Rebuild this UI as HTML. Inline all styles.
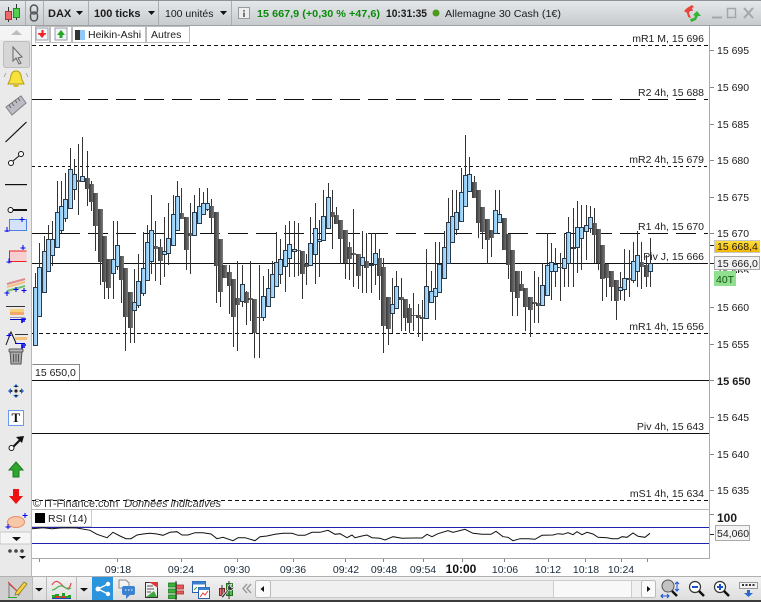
<!DOCTYPE html>
<html><head><meta charset="utf-8"><title>DAX</title>
<style>
html,body{margin:0;padding:0;width:761px;height:602px;overflow:hidden;background:#fff}
svg{display:block}
text{font-family:"Liberation Sans",sans-serif;font-size:10.5px;fill:#1c1c1c}
.r{font-size:10.5px;text-anchor:end;fill:#222}
.p{fill:#222}
.t{text-anchor:middle;fill:#1a2a3a}
.b{font-weight:bold;font-size:11px}
</style></head><body>
<svg id="s" width="761" height="602" viewBox="0 0 761 602" xmlns="http://www.w3.org/2000/svg">
<defs>
<linearGradient id="top" x1="0" y1="0" x2="0" y2="1"><stop offset="0" stop-color="#e6e9ec"/><stop offset="1" stop-color="#c6cacd"/></linearGradient>
<linearGradient id="up" x1="0" y1="0" x2="1" y2="0"><stop offset="0" stop-color="#7cc2f3"/><stop offset="1" stop-color="#c2e4fb"/></linearGradient>
<linearGradient id="dn" x1="0" y1="0" x2="1" y2="0"><stop offset="0" stop-color="#383838"/><stop offset="1" stop-color="#7a7a7a"/></linearGradient>
<linearGradient id="yl" x1="0" y1="0" x2="0" y2="1"><stop offset="0" stop-color="#ffe040"/><stop offset="1" stop-color="#f2b400"/></linearGradient>
<linearGradient id="bar" x1="0" y1="0" x2="0" y2="1"><stop offset="0" stop-color="#f2f2f2"/><stop offset="1" stop-color="#dedede"/></linearGradient>
</defs>
<rect width="761" height="602" fill="#fff"/>

<!-- top bar -->
<rect width="761" height="26" fill="url(#top)"/>
<rect y="0" width="761" height="1" fill="#8f9397"/>
<rect y="25" width="761" height="1" fill="#9da1a4"/>
<g fill="#a9adb0"><rect x="25" y="1" width="1" height="24"/><rect x="43" y="1" width="1" height="24"/><rect x="88" y="1" width="1" height="24"/><rect x="158" y="1" width="1" height="24"/><rect x="231" y="1" width="1" height="24"/></g>
<path d="M8.500 7V22M16.500 4V20" stroke="#333" fill="none"/>
<rect x="5.500" y="11.500" width="6" height="8" fill="#ee6a6a" stroke="#a33"/>
<rect x="13.500" y="8.500" width="6" height="9" fill="#4fd14f" stroke="#2a8a2a"/>
<g fill="none" stroke="#555" stroke-width="1.500"><rect x="30.500" y="5" width="7" height="9" rx="3.500"/><rect x="30.500" y="12" width="7" height="9" rx="3.500"/></g>
<text x="48" y="17" class="b">DAX</text><path d="M76 11h7l-3.500 4z" fill="#111"/>
<text x="94" y="17" class="b">100 ticks</text><path d="M148 11h7l-3.500 4z" fill="#111"/>
<text x="165" y="17">100 unités</text><path d="M220 11h7l-3.500 4z" fill="#111"/>
<rect x="238.500" y="7.500" width="11" height="11" fill="#eee" stroke="#999"/><path d="M243 10h2v1.500h-2zM243 12.500h2V17h-2z" fill="#777"/>
<text x="257" y="17" style="fill:#0a8a0a;font-weight:bold" textLength="123" lengthAdjust="spacingAndGlyphs">15 667,9 (+0,30 % +47,6)</text>
<text x="386" y="17" class="b" textLength="41" lengthAdjust="spacingAndGlyphs">10:31:35</text>
<circle cx="436" cy="13" r="3.500" fill="#4c9a1c"/>
<text x="445" y="17" textLength="116" lengthAdjust="spacingAndGlyphs">Allemagne 30 Cash (1€)</text>
<path d="M692 5l-5 3-3 3 3 2 1 4 3 1-2-5 1-2h3l-1-3 2-1z" fill="#e8453c"/>
<path d="M691 22l5-2 2-4 3 0-4-5-4 4 2 1-1 2-4 1z" fill="#35b335"/>
<g fill="none" stroke="#a3a7aa" stroke-width="2"><path d="M712 17.500h10"/><rect x="727.500" y="8.500" width="8" height="9" stroke-width="1.500"/><path d="M744 8l9 10M753 8l-9 10"/></g>

<!-- left toolbar -->
<rect y="26" width="31" height="551" fill="#eaeaea"/>
<rect x="31" y="26" width="1" height="551" fill="#b8b8b8"/>
<rect x="0" y="26" width="31" height="14" fill="#f4f4f4"/>
<path d="M11 35h11l-5.500-5z" fill="#bdbdbd"/>
<rect x="3.500" y="41.500" width="26" height="26" rx="2" fill="#d6d6d6" stroke="#bdbdbd"/>
<path d="M13 47v14l3-3 3 6 2-1-3-5 4-1z" fill="#ddd" stroke="#666"/>
<path d="M16 71c-5 0-5 5-6 9-1 2-2 3-2 4h16c0-1-1-2-2-4-1-4-1-9-6-9z" fill="#f6e23a" stroke="#b09a10"/>
<path d="M13 85h6a3 2 0 0 1-6 0z" fill="#d8b800"/>
<path d="M6 73l-2 4M26 73l2 4" stroke="#aaa" fill="none"/>
<path d="M6 107L21 96l5 7-14 12z" fill="#bcbcc4" stroke="#808088"/>
<path d="M9 105l2 3M12 103l2 3M15 100l2 3M18 98l2 3" stroke="#666" fill="none"/>
<path d="M5.500 142L26.500 122" stroke="#111" stroke-width="1.200" fill="none"/>
<path d="M13 161L20 155" stroke="#111" fill="none"/><g fill="#fff" stroke="#111"><circle cx="11" cy="163" r="2.500"/><circle cx="21" cy="154" r="2.500"/></g>
<rect x="5" y="184" width="22" height="1.200" fill="#111"/>
<rect x="12" y="209" width="15" height="2" fill="#111"/><circle cx="10.500" cy="210" r="2.500" fill="#fff" stroke="#111"/>
<rect x="9.500" y="219.500" width="17" height="11" fill="#d4e2fa" stroke="#4d7fdc"/>
<path d="M7 232v-5M4.500 231h5M22 222v-5M19.500 219.500h5" stroke="#00e" fill="none"/>
<rect x="9.500" y="251.500" width="17" height="10" fill="#f6cfd0"/><path d="M9.500 262v-11h17M9.500 261.500h17" stroke="#e22" fill="none"/>
<path d="M9 263.500v-5M6.500 262h5M23 250v-5M20.500 248h5" stroke="#00e" fill="none"/>
<path d="M7 284l18-5" stroke="#e08a8a" stroke-width="2" fill="none"/><path d="M7 287l18-5" stroke="#f0c080" stroke-width="2" fill="none"/><path d="M7 291l18-5" stroke="#70c070" stroke-width="2" fill="none"/>
<path d="M7 296v-5M4.500 293h5M16 292v-5M13.500 289.500h5M24 293v-5M21.500 290.500h5" stroke="#00e" fill="none"/>
<rect x="6" y="306" width="19" height="1" fill="#333" /><rect x="10" y="309" width="14" height="3" fill="#f6d27a"/><rect x="10" y="312" width="14" height="3" fill="#f4a86a"/><rect x="10" y="317" width="15" height="1" fill="#99a"/><rect x="10" y="319" width="15" height="1" fill="#00c"/>
<path d="M22 323v-4h4M22 321h3" stroke="#00e" stroke-width="1.600" fill="none"/>
<path d="M6 345l5-13 5 11" stroke="#111" fill="none"/><rect x="15" y="334" width="13" height="1" fill="#333"/><rect x="15" y="337" width="12" height="3" fill="#f6c27a"/><rect x="15" y="343" width="10" height="1" fill="#00c"/>
<path d="M9 338v-5M6.500 335.500h5" stroke="#00e" fill="none"/><path d="M22 349v-4h4M22 347h3" stroke="#00e" stroke-width="1.600" fill="none"/>
<path d="M10 351h12l-1 13h-10z" fill="#aaa" stroke="#555"/><rect x="9" y="349" width="14" height="3" rx="1" fill="#bbb" stroke="#555"/>
<path d="M13.500 354v8M16 354v8M18.500 354v8" stroke="#555" fill="none"/>
<g fill="#2a6ad0"><path d="M16 384l3 3h-6zM16 398l3-3h-6zM8 391l3-3v6zM24 391l-3-3v6z"/></g><circle cx="16" cy="391" r="1.600" fill="#222"/><circle cx="11.500" cy="391" r="1" fill="#222"/><circle cx="20.500" cy="391" r="1" fill="#222"/><circle cx="16" cy="386.500" r="1" fill="#222"/><circle cx="16" cy="395.500" r="1" fill="#222"/>
<rect x="8.500" y="410.500" width="15" height="15" fill="#fff" stroke="#6a9af0"/>
<text x="11.500" y="422" style="font-family:'Liberation Serif',serif;font-size:13px;font-weight:bold;fill:#111">T</text>
<path d="M13 447L21 439" stroke="#111" stroke-width="2" fill="none"/><path d="M24 436l-8 1 6 6z" fill="#111"/><circle cx="11.500" cy="448" r="2.500" fill="#fff" stroke="#111"/>
<path d="M16 462l7 8h-4v7h-6v-7h-4z" fill="#2ea62e" stroke="#1c7a1c"/>
<path d="M13 489h6v7h4l-7 8-7-8h4z" fill="#ee1111"/>
<ellipse cx="16" cy="522" rx="8.500" ry="5.500" fill="#f6c8a8" stroke="#e88a60"/>
<path d="M25 518v-5M22.500 515.500h5M8 529v-5M5.500 527h5" stroke="#00e" fill="none"/>
<rect x="0" y="532" width="31" height="12" fill="#f6f6f6" stroke="#c8c8c8"/>
<path d="M12 537h9l-4.500 4z" fill="#111"/>
<circle cx="10" cy="551" r="1.800" fill="#444"/><circle cx="16" cy="551" r="1.800" fill="#444"/><circle cx="22" cy="551" r="1.800" fill="#444"/>
<path d="M19 556h7l-3.500 3z" fill="#111"/>

<!-- tabs row -->
<g fill="#fff" stroke="#bdbdbd"><rect x="35.500" y="26.500" width="14" height="16"/><rect x="50.500" y="26.500" width="21" height="16"/><rect x="72.500" y="26.500" width="73" height="16"/><rect x="146.500" y="26.500" width="43" height="16"/></g>
<rect x="36" y="28" width="12" height="12" fill="#f2f4f8" stroke="#99a"/><path d="M41.500 30v3H38l4 5 4-5h-2.500v-3z" fill="#e22"/><path d="M38 34h8" stroke="#e22"/>
<rect x="55" y="28" width="12" height="12" fill="#f2f4f8" stroke="#99a"/><path d="M61 30l-4 5h2.500v3h3v-3H65z" fill="#2a2"/>
<rect x="75" y="30" width="5" height="10" fill="#333"/><rect x="80" y="30" width="5" height="10" fill="#90c8f8"/>
<text x="88" y="38">Heikin-Ashi</text><text x="151" y="38">Autres</text>

<!-- chart lines -->
<g fill="none" stroke="#111">
<path d="M32 45.500H708" stroke-dasharray="4 3"/>
<path d="M32 99.500H708" stroke-dasharray="20 8"/>
<path d="M32 166.500H708" stroke-dasharray="3 3"/>
<path d="M32 233.500H708" stroke-dasharray="20 8"/>
<path d="M32 263.500H708"/>
<path d="M32 333.500H708" stroke-dasharray="4 3"/>
<path d="M32 380.500H709"/>
<path d="M32 433.500H709"/>
<path d="M32 500.500H708" stroke-dasharray="4 3"/>
</g>
<g id="c"></g>

<!-- static labels -->
<text class="r" x="704" y="42">mR1 M, 15 696</text>
<text class="r" x="704" y="96">R2 4h, 15 688</text>
<text class="r" x="704" y="163">mR2 4h, 15 679</text>
<text class="r" x="704" y="230">R1 4h, 15 670</text>
<text class="r" x="704" y="260">Piv J, 15 666</text>
<text class="r" x="704" y="330">mR1 4h, 15 656</text>
<text class="r" x="704" y="430">Piv 4h, 15 643</text>
<text class="r" x="704" y="497">mS1 4h, 15 634</text>
<rect x="32" y="364" width="47" height="16" fill="#fff"/><path d="M32.500 364.500H79.500V380" fill="none" stroke="#888"/>
<text x="35" y="376">15 650,0</text>
<text x="33" y="507" style="fill:#333;font-size:10.800px">© IT-Finance.com<tspan dx="6" font-style="italic">Données indicatives</tspan></text>

<!-- axis -->
<rect x="709" y="26" width="1" height="533" fill="#aaa"/>
<g fill="#888"><rect x="710" y="50" width="4" height="1"/><rect x="710" y="87" width="4" height="1"/><rect x="710" y="124" width="4" height="1"/><rect x="710" y="160" width="4" height="1"/><rect x="710" y="197" width="4" height="1"/><rect x="710" y="233" width="4" height="1"/><rect x="710" y="307" width="4" height="1"/><rect x="710" y="344" width="4" height="1"/><rect x="710" y="380" width="4" height="1"/><rect x="710" y="417" width="4" height="1"/><rect x="710" y="454" width="4" height="1"/><rect x="710" y="490" width="4" height="1"/><rect x="710" y="514" width="4" height="1"/></g>
<g class="p">
<text x="717" y="54">15 695</text><text x="717" y="91">15 690</text><text x="717" y="128">15 685</text><text x="717" y="164">15 680</text><text x="717" y="201">15 675</text><text x="717" y="237">15 670</text><text x="717" y="275">15 665</text><text x="717" y="311">15 660</text><text x="717" y="348">15 655</text><text x="717" y="385" class="b">15 650</text><text x="717" y="421">15 645</text><text x="717" y="458">15 640</text><text x="717" y="494">15 635</text>
</g>
<rect x="714" y="273" width="47" height="14" fill="#fff"/>
<rect x="710" y="245" width="4" height="1" fill="#222"/><rect x="710" y="263" width="4" height="1" fill="#222"/>
<rect x="714.500" y="240.500" width="45" height="12" fill="url(#yl)" stroke="#c8c8c8"/><text x="717" y="250">15 668,4</text>
<rect x="714.500" y="256.500" width="45" height="13" fill="#f2f2f2" stroke="#aaa"/><text x="717" y="267">15 666,0</text>
<rect x="714" y="271" width="22" height="15" fill="#90e090"/><text x="716" y="283" style="fill:#165016">40T</text>

<!-- RSI -->
<rect x="32" y="509" width="678" height="1" fill="#b8b8b8"/>
<rect x="32" y="558" width="678" height="1" fill="#aaa"/>
<rect x="32" y="527" width="677" height="1" fill="#2222b0"/>
<rect x="32" y="543" width="677" height="1" fill="#2222b0"/>
<path fill="none" stroke="#111" d="M32 528.700L43 527.700L52 528.700L60 528L68 527.700L77 528L90 530.300L97 534.300L107 537.700L113 532.300L120 536L126 538.700L131 538.700L137 535L143 534L150 533.300L157 534L163 535.300L170 532.300L177 531.700L182 535L188 535L195 532.700L203 532.700L211 534L217 538.700L223 537.300L233 540.700L238 537.700L245 537.700L255 540.700L260 536.700L267 536L275 534.300L283 533.300L292 533.300L298 535.300L305 535.300L312 532.300L320 532.300L328 530.300L335 534.300L340 533.700L347 537.700L352 535L355 537.700L362 536L367 535L372 537.700L380 538.300L385 540L393 536.700L402 538.300L413 538L422 538L427 534.300L432 536.700L438 533.700L448 530.700L453 532.300L465 529.300L473 533.300L482 534.300L491 534.300L496 531.300L503 536.700L508 537.300L513 540.700L520 538.700L528 538.700L535 539.300L542 535.300L553 535L558 533.700L563 534.300L568 532.700L573 534.700L577 531.700L582 534.700L587 532.300L593 534L598 537.300L607 537.700L612 538.700L618 538.700L622 536.700L627 537.300L633 533L638 536.300L645 537.300L650 533.300"/>
<rect x="32" y="510" width="59" height="16" fill="#fff"/><path d="M91.500 510V526.500H32" fill="none" stroke="#ccc"/>
<rect x="35" y="513" width="10" height="10" fill="#000"/><text x="48" y="522">RSI (14)</text>
<text x="717" y="522" style="font-size:12px;font-weight:bold">100</text>
<rect x="710" y="534" width="4" height="1" fill="#222"/>
<rect x="715.500" y="525.500" width="34" height="15" fill="#f4f4f4" stroke="#aaa"/><text x="717" y="537">54,060</text>

<!-- time axis -->
<g fill="#888"><rect x="39" y="559" width="1" height="3"/><rect x="117" y="559" width="1" height="3"/><rect x="181" y="559" width="1" height="3"/><rect x="237" y="559" width="1" height="3"/><rect x="293" y="559" width="1" height="3"/><rect x="345" y="559" width="1" height="3"/><rect x="383" y="559" width="1" height="3"/><rect x="423" y="559" width="1" height="3"/><rect x="462" y="559" width="1" height="3"/><rect x="504" y="559" width="1" height="3"/><rect x="548" y="559" width="1" height="3"/><rect x="585" y="559" width="1" height="3"/><rect x="621" y="559" width="1" height="3"/><rect x="647" y="559" width="1" height="3"/></g>
<g><text class="t" x="118" y="573">09:18</text><text class="t" x="181" y="573">09:24</text><text class="t" x="237" y="573">09:30</text><text class="t" x="293" y="573">09:36</text><text class="t" x="346" y="573">09:42</text><text class="t" x="384" y="573">09:48</text><text class="t" x="423" y="573">09:54</text><text class="t" x="461" y="573" style="font-size:12px;font-weight:bold;fill:#111">10:00</text><text class="t" x="505" y="573">10:06</text><text class="t" x="548" y="573">10:12</text><text class="t" x="586" y="573">10:18</text><text class="t" x="621" y="573">10:24</text></g>

<!-- bottom bar -->
<rect y="577" width="761" height="23" fill="url(#bar)"/>
<rect y="576" width="761" height="1" fill="#b0b0b0"/>
<rect y="600" width="761" height="2" fill="#3c3c3c"/>
<rect x="0" y="577" width="32" height="23" fill="#d0d0d0"/>
<path d="M9 597V584l8 7 2 5" fill="none" stroke="#777"/><path d="M8 582l12 12" stroke="#e03030" fill="none"/><path d="M8 597.500h9" stroke="#2a2"/>
<path d="M16 592l8-10 3 2-8 10-4 1z" fill="#f2d040" stroke="#8a7a20" stroke-width=".8"/>
<rect x="32" y="577" width="1" height="23" fill="#bbb"/>
<path d="M35 588h8l-4 3.500z" fill="#111"/>
<rect x="46" y="577" width="1" height="23" fill="#bbb"/><rect x="76" y="577" width="1" height="23" fill="#bbb"/>
<path d="M52 585c4-7 8-2 11 1s7 4 8-3" fill="none" stroke="#e04848" stroke-width="1.200"/>
<path d="M52 590c4 0 6-5 10-4s5 5 9 2" fill="none" stroke="#50b050" stroke-width="1.200"/>
<path d="M52 598v-3h3v-1h4v2h3v-3h3v3h3v-1h3v3z" fill="#22a022"/><path d="M55 598v-2h4v2zM62 598v-2h3v2z" fill="#e03030"/><rect x="52" y="598" width="19" height="1" fill="#2040c0"/>
<path d="M80 588h8l-4 3.500z" fill="#111"/>
<rect x="92" y="577" width="21" height="23" fill="#2a94dc"/>
<path d="M98 589l10-5M98 589l10 5" stroke="#fff" fill="none" stroke-width="1.300"/><circle cx="98" cy="589" r="2.500" fill="#fff"/><circle cx="108" cy="584" r="2.200" fill="#fff"/><circle cx="108" cy="594" r="2.200" fill="#fff"/>
<path d="M119 580h7l3 3v5h-10z" fill="#f4f4f4" stroke="#8a8a8a"/>
<rect x="122" y="586" width="13" height="9" rx="2" fill="#3b82d0"/><path d="M126 595v4l4-4z" fill="#3b82d0"/><path d="M125 590h1.500M128 590h1.500M131 590h1.500" stroke="#fff"/>
<rect x="145.500" y="582.500" width="12" height="15" fill="#f0f0f0" stroke="#333"/><path d="M149 582h9v6z" fill="#d83a3a"/><path d="M146 597l8-6 3 6z" fill="#3da83d"/><path d="M147 586h6M147 589h7M147 592h4" stroke="#555" fill="none"/>
<g fill="#3cb03c" stroke="#1c7a1c" stroke-width=".8"><rect x="168.500" y="583" width="8" height="4"/><rect x="168.500" y="589" width="8" height="4"/><rect x="168.500" y="595" width="8" height="3.500"/></g><g fill="#e85a5a" stroke="#a83030" stroke-width=".8"><rect x="176.500" y="585" width="7" height="4"/><rect x="176.500" y="591" width="7" height="3"/></g><path d="M176 581v19" stroke="#333"/>
<rect x="192.500" y="581.500" width="13" height="11" fill="#fff" stroke="#2a5fb0"/><rect x="192.500" y="581.500" width="13" height="3" fill="#3a80d0"/>
<rect x="198.500" y="587.500" width="11" height="11" fill="#fff" stroke="#2a5fb0"/><rect x="198.500" y="587.500" width="11" height="2.500" fill="#3a80d0"/><path d="M200 597l3-4 2 2 3-4" stroke="#e04040" fill="none"/><path d="M194 590l3-3" stroke="#40a040" fill="none"/>
<rect x="219.500" y="588.500" width="5" height="7" fill="#e87070" stroke="#802020"/><rect x="226.500" y="583.500" width="6" height="12" fill="#50c050" stroke="#207020"/><path d="M229 581v18M222 585v13" stroke="#333"/>
<path d="M221 597l7-8c-1-3 1-5 4-5l-2 2 2 2 2-2c0 3-2 5-5 4l-6 8z" fill="#333" stroke="#fff" stroke-width=".6"/>
<path d="M247 584l-4 4.500 4 4.500M251 584l-4 4.500 4 4.500" stroke="#999" stroke-width="1.400" fill="none"/>
<rect x="255.500" y="580.500" width="400" height="17" rx="2" fill="#f0f0f0" stroke="#ccc"/>
<rect x="255.500" y="580.500" width="15" height="17" rx="2" fill="#fafafa" stroke="#bbb"/><path d="M264 586v6l-3.500-3z" fill="#111"/>
<path d="M553.500 581v16M631.500 581v16" stroke="#ccc" fill="none"/><rect x="554" y="581" width="77" height="16" fill="#f8f8f8"/>
<rect x="641.500" y="580.500" width="14" height="17" rx="2" fill="#fafafa" stroke="#bbb"/><path d="M647 586v6l3.500-3z" fill="#111"/>
<circle cx="668" cy="586" r="6" fill="#c2c2c2" stroke="#555"/><path d="M672 591l5 5" stroke="#111" stroke-width="2.500" fill="none"/>
<path d="M677 582v9M675 584l2-2 2 2M675 589l2 2 2-2M661 596h8M663 594l-2 2 2 2M667 594l2 2-2 2" stroke="#1a50d0" fill="none"/>
<circle cx="695" cy="587" r="5.500" fill="#fff" stroke="#333" stroke-width="1.200"/><path d="M692 587h6" stroke="#1a50d0" stroke-width="2" fill="none"/><path d="M699 591l5 5" stroke="#111" stroke-width="2.500" fill="none"/>
<circle cx="720" cy="587" r="5.500" fill="#fff" stroke="#333" stroke-width="1.200"/><path d="M717 587h6M720 584v6" stroke="#1a50d0" stroke-width="2" fill="none"/><path d="M724 591l5 5" stroke="#111" stroke-width="2.500" fill="none"/>
<rect x="739.500" y="582.500" width="18" height="6" fill="#f2f2f2" stroke="#999"/><path d="M742 584h2v2h-2zM745.500 584h2v2h-2zM749 584h2v2h-2zM752.500 584h2v2h-2z" fill="#333"/><path d="M747 590h3v3h3l-4.500 4-4.500-4h3z" fill="#2a6ad0"/>
</svg>
<script>
var D=[
[30,130,[[16,472,646,430,646,1],[28,412,559,340,559,1],[43,364,487,318,487,1],[55,328,424,285,424,1],[67,328,376,274,408,1],[82,247,352,153,352,1],[94,229,301,153,310,1],[106,208,265,130,275,1],[121,118,235,55,235,1],[133,133,178,87,210,1],[145,151,155,42,254,0],[157,139,154,22,154,1],[171,144,176,63,228,0],[183,163,216,153,243,0],[195,190,287,190,362,0],[210,238,395,238,465,0],[222,319,455,319,507,0],[234,388,473,388,507,0],[250,388,430,274,507,1],[262,346,409,274,420,1],[273,379,449,379,519,0],[285,415,560,415,662,0],[300,487,593,487,638,0],[313,515,541,418,638,1],[325,454,526,373,535,1],[340,415,490,307,497,1],[352,337,451,286,451,1],[364,301,394,196,432,1],[376,349,356,274,452,0],[390,352,392,326,465,0],[403,364,373,262,440,1],[415,325,370,220,406,1],[429,253,346,196,346,1],[442,199,301,154,301,1],[454,250,268,175,268,0],[468,262,359,262,420,0],[480,310,319,220,432,0],[493,247,316,196,316,1],[506,229,280,175,280,1]]],
[200,170,[[10,100,133,67,133,1],[22,100,118,55,122,1],[34,109,143,87,190,0],[48,127,287,127,398,0],[60,208,365,208,410,0],[72,286,323,286,323,0],[87,306,347,286,432,0],[99,328,440,328,530,0],[111,385,404,274,542,0],[127,343,394,286,410,1],[139,367,398,364,464,0],[150,385,391,274,452,0],[162,388,490,388,563,0],[178,441,443,286,563,0],[190,379,442,319,452,1],[203,355,409,298,409,1],[217,313,382,274,382,1],[229,277,349,187,349,1],[241,268,313,208,343,1],[256,241,289,166,365,1],[268,223,265,154,320,1],[281,238,244,154,320,1],[293,240,243,160,319,0],[306,244,311,244,386,0],[318,281,290,252,345,0],[331,220,286,142,286,1],[346,175,253,100,343,1],[358,208,214,150,320,1],[370,139,211,61,211,1],[385,82,175,40,175,1],[397,127,142,61,238,0],[408,136,163,112,163,0],[420,151,208,151,283,0],[435,181,280,181,326,0],[447,232,268,217,331,0],[458,250,254,118,350,0],[473,253,317,253,358,0],[487,262,286,184,370,1],[498,274,295,190,370,0],[514,283,286,190,370,1],[526,250,283,190,345,1],[537,265,317,238,390,0]]],
[380,130,[[8,411,587,385,668,0],[23,502,596,502,644,0],[37,523,550,445,610,1],[49,469,535,423,535,1],[62,502,509,445,602,0],[75,508,563,508,604,0],[87,534,578,522,610,0],[100,556,559,490,604,0],[114,556,563,522,622,0],[127,562,566,510,634,0],[139,469,565,358,565,1],[154,482,517,423,517,1],[166,475,499,337,570,1],[178,403,487,337,487,1],[193,352,445,304,445,1],[205,277,400,205,400,1],[217,259,337,181,337,1],[229,247,298,181,315,1],[244,187,274,115,274,1],[256,136,229,15,229,1],[268,133,184,82,184,1],[282,157,203,139,203,0],[294,181,278,181,325,0],[306,232,305,232,358,0],[321,268,331,268,403,0],[333,301,323,301,382,0],[346,241,310,181,310,1],[358,253,277,181,277,1],[372,265,359,265,359,0],[384,313,406,313,447,0],[396,361,485,361,557,0],[411,424,503,424,557,0],[423,462,482,424,482,0],[435,475,530,475,603,0],[450,502,541,502,622,0],[463,517,523,424,578,0],[475,520,529,440,578,0],[487,466,526,400,526,1],[502,406,496,310,496,1]]],
[540,190,[[34,217,244,158,330,1],[46,222,243,175,290,1],[60,232,235,190,333,0],[73,205,235,130,290,1],[85,125,220,80,290,1],[98,170,172,55,290,1],[111,110,170,33,250,1],[124,110,143,45,240,1],[137,106,124,45,210,1],[151,82,115,48,130,1],[163,100,136,55,220,0],[175,118,220,118,240,0],[187,166,268,166,333,0],[199,222,265,222,320,0],[213,243,292,243,333,0],[227,271,332,271,390,0],[241,292,301,245,330,1],[253,263,298,178,333,1],[266,265,270,180,320,0],[280,212,271,157,280,1],[292,196,244,122,290,1],[304,217,232,157,298,0],[318,226,261,196,292,0],[331,220,244,144,292,1]]]
];
var g=document.getElementById('c'),w='',b='';
D.forEach(function(o){var ox=o[0],oy=o[1];o[2].forEach(function(c){
var x=Math.round(ox+c[0]/3),t=Math.round(oy+c[1]/3),bt=Math.round(oy+c[2]/3),h=Math.round(oy+c[3]/3),l=Math.round(oy+c[4]/3);
if(bt<=t)bt=t+1;
w+='<rect x="'+x+'" y="'+h+'" width="1" height="'+Math.max(l-h,1)+'" fill="#333"/>';
if(c[5])b+='<rect x="'+(x-2+.5)+'" y="'+(t+.5)+'" width="4" height="'+(bt-t)+'" fill="url(#up)" stroke="#2b3a4a"/>';
else b+='<rect x="'+(x-2)+'" y="'+t+'" width="5" height="'+(bt-t)+'" fill="url(#dn)"/>';
});});
g.innerHTML=w+b;
</script>
</body></html>
